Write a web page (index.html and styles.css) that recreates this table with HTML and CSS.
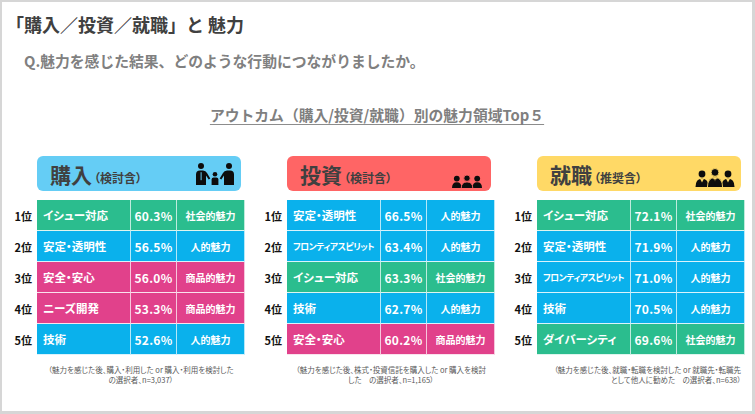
FILE: index.html
```html
<!DOCTYPE html>
<html lang="ja">
<head>
<meta charset="utf-8">
<title>「購入／投資／就職」と 魅力</title>
<link rel="stylesheet" href="styles.css">
</head>
<body>
<div class="frame">
  <h1 class="title">「購入／投資／就職」と 魅力</h1>
  <p class="question">Q.魅力を感じた結果、どのような行動につながりましたか。</p>
  <h2 class="chart-title"><span>アウトカム（購入/投資/就職）別の魅力領域Top５</span></h2>

  <div class="columns">
    <section class="group">
      <div class="head head-blue">
        <div class="head-text"><span class="head-main">購入</span><span class="head-sub">（検討含）</span></div>
        <svg class="icon icon-family" viewBox="0 0 38 22" aria-hidden="true">
          <circle cx="5" cy="3" r="3"/>
          <path d="M0 22V11.5Q0 7.5 4 7.5H7Q9.8 7.5 11 10L14.3 15.4L12.7 16.4L10 12.5V22Z"/>
          <rect x="4.6" y="9.2" width="1" height="8" class="cut-blue"/>
          <circle cx="19" cy="11.2" r="2.3"/>
          <path d="M15.6 22V16.4Q15.6 14.4 17.6 14.4H20.4Q22.4 14.4 22.4 16.4V22Z"/>
          <circle cx="33" cy="3" r="3"/>
          <path d="M38 22V11.5Q38 7.5 34 7.5H31Q28.2 7.5 27 10L23.7 15.4L25.3 16.4L28 12.5V22Z"/>
        </svg>
      </div>
      <div class="table">
        <div class="row"><span class="rank">1位</span><span class="cell name green">イシュー対応</span><span class="cell pct green">60.3%</span><span class="cell cat green">社会的魅力</span></div>
        <div class="row"><span class="rank">2位</span><span class="cell name blue">安定・透明性</span><span class="cell pct blue">56.5%</span><span class="cell cat blue">人的魅力</span></div>
        <div class="row"><span class="rank">3位</span><span class="cell name pink">安全・安心</span><span class="cell pct pink">56.0%</span><span class="cell cat pink">商品的魅力</span></div>
        <div class="row"><span class="rank">4位</span><span class="cell name pink">ニーズ開発</span><span class="cell pct pink">53.3%</span><span class="cell cat pink">商品的魅力</span></div>
        <div class="row"><span class="rank">5位</span><span class="cell name blue">技術</span><span class="cell pct blue">52.6%</span><span class="cell cat blue">人的魅力</span></div>
      </div>
      <p class="note">（魅力を感じた後、購入・利用した or 購入・利用を検討した<br>の選択者、n=3,037）</p>
    </section>

    <section class="group">
      <div class="head head-red">
        <div class="head-text"><span class="head-main">投資</span><span class="head-sub">（検討含）</span></div>
        <svg class="icon icon-group" viewBox="0 0 30 13" aria-hidden="true">
          <circle cx="4.8" cy="3.6" r="2.9"/>
          <path d="M0 13Q0 7.2 4.8 7.2Q9.6 7.2 9.6 13Z"/>
          <circle cx="25.2" cy="3.6" r="2.9"/>
          <path d="M20.4 13Q20.4 7.2 25.2 7.2Q30 7.2 30 13Z"/>
          <circle cx="15" cy="3.2" r="3.2" class="sep-red"/>
          <path d="M9.2 13.5Q9.2 6.9 15 6.9Q20.8 6.9 20.8 13.5Z" class="sep-red"/>
        </svg>
      </div>
      <div class="table">
        <div class="row"><span class="rank">1位</span><span class="cell name blue">安定・透明性</span><span class="cell pct blue">66.5%</span><span class="cell cat blue">人的魅力</span></div>
        <div class="row"><span class="rank">2位</span><span class="cell name blue small">フロンティアスピリット</span><span class="cell pct blue">63.4%</span><span class="cell cat blue">人的魅力</span></div>
        <div class="row"><span class="rank">3位</span><span class="cell name green">イシュー対応</span><span class="cell pct green">63.3%</span><span class="cell cat green">社会的魅力</span></div>
        <div class="row"><span class="rank">4位</span><span class="cell name blue">技術</span><span class="cell pct blue">62.7%</span><span class="cell cat blue">人的魅力</span></div>
        <div class="row"><span class="rank">5位</span><span class="cell name pink">安全・安心</span><span class="cell pct pink">60.2%</span><span class="cell cat pink">商品的魅力</span></div>
      </div>
      <p class="note">（魅力を感じた後、株式・投資信託を購入した or 購入を検討<br>した　の選択者、n=1,165）</p>
    </section>

    <section class="group">
      <div class="head head-yellow">
        <div class="head-text"><span class="head-main">就職</span><span class="head-sub">（推奨含）</span></div>
        <svg class="icon icon-business" viewBox="0 0 40 19" aria-hidden="true">
          <circle cx="7" cy="6" r="3.4"/>
          <path d="M0.5 19Q0.5 10.8 7 10.8Q13.5 10.8 13.5 19Z"/>
          <path d="M5.2 10.9L7 14.6L8.8 10.9Z" class="cut-yellow"/>
          <circle cx="33" cy="6" r="3.4"/>
          <path d="M26.5 19Q26.5 10.8 33 10.8Q39.5 10.8 39.5 19Z"/>
          <path d="M31.2 10.9L33 14.6L34.8 10.9Z" class="cut-yellow"/>
          <circle cx="20" cy="4.4" r="3.9" class="sep-yellow"/>
          <path d="M12.4 19.5Q12.4 9.6 20 9.6Q27.6 9.6 27.6 19.5Z" class="sep-yellow"/>
          <path d="M18 9.7L20 13.8L22 9.7Z" class="cut-yellow"/>
          <path d="M19.4 11.2H20.6L21 16L20 17.2L19 16Z"/>
        </svg>
      </div>
      <div class="table">
        <div class="row"><span class="rank">1位</span><span class="cell name green">イシュー対応</span><span class="cell pct green">72.1%</span><span class="cell cat green">社会的魅力</span></div>
        <div class="row"><span class="rank">2位</span><span class="cell name blue">安定・透明性</span><span class="cell pct blue">71.9%</span><span class="cell cat blue">人的魅力</span></div>
        <div class="row"><span class="rank">3位</span><span class="cell name blue small">フロンティアスピリット</span><span class="cell pct blue">71.0%</span><span class="cell cat blue">人的魅力</span></div>
        <div class="row"><span class="rank">4位</span><span class="cell name blue">技術</span><span class="cell pct blue">70.5%</span><span class="cell cat blue">人的魅力</span></div>
        <div class="row"><span class="rank">5位</span><span class="cell name green">ダイバーシティ</span><span class="cell pct green">69.6%</span><span class="cell cat green">社会的魅力</span></div>
      </div>
      <p class="note note-right">（魅力を感じた後、就職・転職を検討した or 就職先・転職先<br>として他人に勧めた　の選択者、n=638）</p>
    </section>
  </div>
</div>
</body>
</html>
```

FILE: styles.css
```css
* { box-sizing: border-box; }

html, body {
  margin: 0;
  padding: 0;
  background: #ffffff;
}

body {
  font-family: "Noto Sans CJK JP", "Noto Sans", sans-serif;
  color: #404040;
}

.frame {
  width: 755px;
  height: 414px;
  border: 2px solid #d6d6d6;
  border-right-width: 3px;
  border-bottom-width: 3px;
  background: #ffffff;
  overflow: hidden;
}

.title {
  margin: 10px 0 0 4px;
  font-size: 18px;
  line-height: 24px;
  font-weight: 700;
  color: #404040;
}

.question {
  margin: 15px 0 0 22px;
  font-size: 14.8px;
  line-height: 20px;
  font-weight: 700;
  color: #808080;
}

.chart-title {
  margin: 34px 0 0 0;
  text-align: center;
  font-size: 14.8px;
  line-height: 20px;
  font-weight: 700;
  color: #7f7f7f;
}

.chart-title span {
  text-decoration: underline;
  text-decoration-color: #8c8c8c;
  text-decoration-thickness: 1px;
  text-underline-offset: 3px;
}

.columns {
  margin-top: 31px;
  padding-left: 12px;
  display: grid;
  grid-template-columns: 231px 231px 231px;
  column-gap: 19px;
}

.group {
  display: flex;
  flex-direction: column;
}

.head {
  margin-left: 23px;
  width: 204px;
  height: 35px;
  border-radius: 6px;
  display: flex;
  justify-content: space-between;
  align-items: center;
  padding: 0 7px 0 13px;
}

.head-blue { background: #65cdf5; }
.head-red { background: #ff6565; }
.head-yellow { background: #ffd966; }

.head-text {
  display: flex;
  align-items: baseline;
  color: #404040;
  font-weight: 700;
}

.head-main {
  font-size: 21px;
  line-height: 26px;
}

.head-sub {
  font-size: 12px;
  font-feature-settings: "palt";
  margin-left: 2px;
}

.icon {
  fill: #0d0d0d;
  align-self: flex-end;
}

.icon-family { width: 38px; height: 22px; margin-bottom: 6px; }
.icon-group { width: 30px; height: 13px; margin-bottom: 3px; margin-right: 2px; }
.icon-business { width: 40px; height: 19px; margin-bottom: 4px; margin-right: -1px; }

.cut-blue { fill: #65cdf5; }
.cut-yellow { fill: #ffd966; }
.sep-red { stroke: #ff6565; stroke-width: 0.9; }
.sep-yellow { stroke: #ffd966; stroke-width: 0.9; }

.table {
  margin-top: 9px;
  display: flex;
  flex-direction: column;
}

.row {
  display: grid;
  grid-template-columns: 23px 94px 46px 68px;
  height: 31px;
}

.rank {
  display: flex;
  align-items: center;
  justify-content: flex-end;
  padding-right: 5px;
  font-size: 11px;
  font-weight: 700;
  color: #111111;
  white-space: nowrap;
}

.cell {
  display: flex;
  align-items: center;
  color: #ffffff;
  font-weight: 700;
  border-right: 1px solid rgba(255, 255, 255, 0.7);
  border-bottom: 1px solid rgba(255, 255, 255, 0.85);
  white-space: nowrap;
  overflow: hidden;
}

.green { background: #2bbd8e; }
.blue { background: #0ab1ec; }
.pink { background: #e1418b; }

.name {
  padding-left: 6px;
  font-size: 11.5px;
  font-feature-settings: "palt";
}

.name.small {
  font-size: 8.8px;
  letter-spacing: -0.5px;
}

.pct {
  justify-content: center;
  font-size: 12px;
  letter-spacing: 0.3px;
}

.cat {
  justify-content: center;
  font-size: 10px;
  font-feature-settings: "palt";
}

.note {
  margin: 10px 0 0 23px;
  width: 208px;
  font-size: 7.5px;
  line-height: 10px;
  color: #595959;
  text-align: center;
  font-feature-settings: "palt";
  white-space: nowrap;
}

.note-right {
  text-align: right;
  padding-right: 4px;
}
```
